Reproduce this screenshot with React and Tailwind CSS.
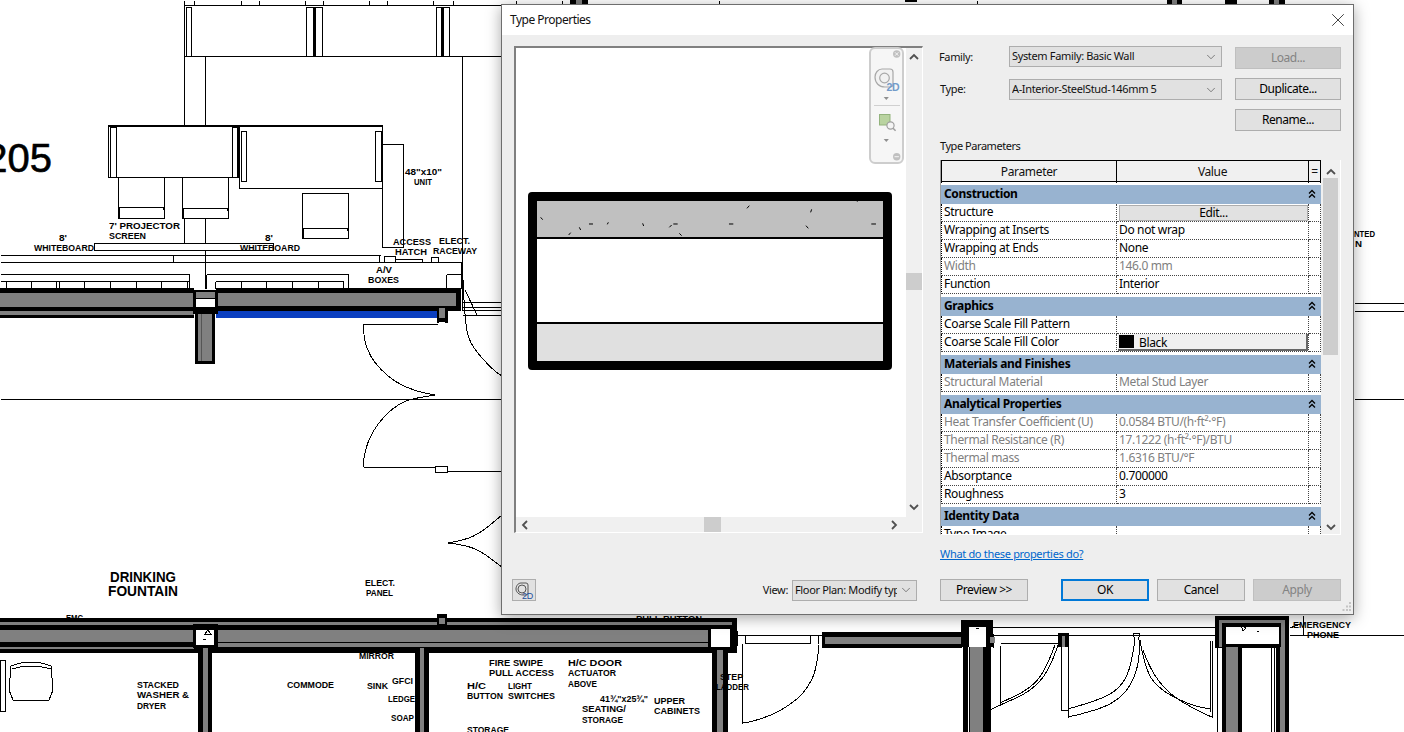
import { ChevronDown, X } from "lucide-react";

const BLACK = "#000";
const GRAY = "#808080";

// floor plan behind the dialog, all in screen pixels
const planRects = [
  // upper wall, left of column
  [0, 288, 194, 30, BLACK], [0, 293, 194, 14, GRAY], [0, 311, 194, 4, GRAY],
  // upper wall, right of column
  [216, 288, 245, 23, BLACK], [216, 293, 240, 13, GRAY], [216, 311, 222, 7, "#0b3fc0"],
  // column at the upper wall
  [193, 290, 25, 24, BLACK], [196, 292, 19, 6, GRAY], [196, 299, 19, 8, "#fff"],
  [195, 314, 20, 50, BLACK], [198, 314, 14, 47, GRAY], [201, 314, 1, 47, "#555"],
  // door stop on the upper wall
  [437, 307, 11, 16, BLACK], [439, 308, 6, 10, GRAY], [439, 322, 6, 3, "#fff"],
  // window mullions at the top
  [313, 7, 3, 49, BLACK], [441, 7, 3, 49, BLACK],
  [570, 0, 18, 4, BLACK], [576, 0, 6, 4, GRAY], [905, 0, 12, 2, BLACK],
  [1167, 0, 15, 4, BLACK], [1172, 0, 5, 4, GRAY], [1225, 0, 12, 4, BLACK], [1269, 0, 16, 4, BLACK], [1274, 0, 5, 4, GRAY],
  // lower wall
  [0, 618, 737, 35, BLACK], [0, 622, 732, 3, GRAY], [0, 630, 732, 12, GRAY], [0, 647, 194, 2, GRAY],
  [216, 643, 492, 4, GRAY],
  [193, 624, 25, 24, BLACK], [196, 630, 18, 15, "#fff"],
  [198, 648, 14, 84, BLACK], [203, 648, 5, 84, GRAY],
  [415, 648, 14, 84, BLACK], [420, 648, 4, 84, GRAY],
  [437, 614, 10, 16, BLACK], [439, 618, 6, 6, GRAY],
  [708, 625, 25, 25, BLACK], [711, 629, 19, 18, "#fff"],
  [712, 650, 16, 82, BLACK], [717, 650, 6, 82, GRAY],
  // wall between the two doors at the bottom
  [822, 632, 140, 16, BLACK], [825, 637, 137, 7, GRAY],
  [961, 620, 32, 27, BLACK], [969, 627, 17, 20, "#fff"],
  [963, 647, 28, 85, BLACK], [970, 647, 13, 85, GRAY], [968, 647, 1, 85, "#fff"],
  [990, 637, 5, 6, GRAY],
  [1058, 633, 11, 14, BLACK], [1062, 636, 3, 11, GRAY],
  // column at the right
  [1215, 616, 74, 32, BLACK], [1219, 620, 66, 27, GRAY], [1222, 623, 59, 24, BLACK], [1226, 627, 53, 17, "#fff"],
  [1222, 647, 20, 85, BLACK], [1226, 647, 12, 85, GRAY],
  [1276, 647, 13, 85, BLACK], [1280, 647, 5, 85, GRAY],
];

const planLines = [
  [184, 0, 184, 125], [184, 218, 184, 243], [205, 56, 205, 125], [205, 218, 205, 288],
  [462, 56, 462, 310], [184, 5, 500, 5], [184, 56, 500, 56],
  [194, 0, 194, 5], [241, 0, 241, 5], [259, 0, 259, 5], [305, 0, 305, 5], [323, 0, 323, 5], [369, 0, 369, 5], [387, 0, 387, 5], [433, 0, 433, 5], [453, 0, 453, 5],
  [516, 0, 516, 4], [562, 0, 562, 4], [719, 0, 719, 4], [977, 0, 977, 4],
  [0, 255, 380, 255], [0, 262, 461, 262], [173, 255, 173, 262], [379, 255, 379, 262], [461, 262, 461, 288],
  [0, 274, 189, 274], [189, 274, 189, 288], [206, 274, 348, 274], [206, 274, 206, 288], [348, 274, 348, 288],
  [446, 274, 461, 274], [446, 274, 446, 288],
  [0, 281, 188, 281], [215, 281, 343, 281],
  [6, 281, 6, 288], [31, 281, 31, 288], [56, 281, 56, 288], [59, 281, 59, 288], [84, 281, 84, 288], [110, 281, 110, 288], [136, 281, 136, 288], [161, 281, 161, 288], [187, 281, 187, 288],
  [215, 281, 215, 288], [241, 281, 241, 288], [266, 281, 266, 288], [292, 281, 292, 288], [318, 281, 318, 288], [343, 281, 343, 288],
  [462, 302, 502, 302], [462, 307, 502, 307], [462, 310, 502, 310], [462, 315, 502, 315], [1354, 303, 1404, 303], [1354, 311, 1404, 311],
  [0, 399, 502, 399], [1354, 399, 1404, 399],
  [363, 324, 437, 324], [363, 467, 436, 467], [447, 471, 502, 471],
  [737, 635, 822, 635], [745, 643, 810, 643], [745, 635, 745, 643], [810, 635, 810, 643], [818, 635, 818, 643], [737, 630, 737, 645], [742, 643, 742, 723],
  [990, 627, 1215, 627], [993, 635, 1215, 635], [1289, 635, 1404, 635], [1303, 615, 1303, 635],
  [1000, 643, 1060, 643], [1000, 645, 1000, 705], [993, 633, 993, 647], [1061, 645, 1061, 710], [1068, 645, 1068, 717], [1061, 710, 1068, 710],
  [1133, 633, 1139, 633], [1133, 633, 1134, 640], [1139, 633, 1138, 640],
  [1210, 640, 1210, 711], [1212, 640, 1212, 717], [1217, 645, 1217, 732], [1271, 647, 1271, 732], [1274, 647, 1274, 732],
];

// outlined boxes: x, y, w, h
const planBoxes = [
  [186, 7, 5, 49], [306, 7, 16, 49], [436, 7, 13, 49],
  [108, 125, 130, 52], [110, 127, 6, 50], [232, 127, 5, 50],
  [239, 125, 143, 63], [241, 131, 5, 50], [375, 131, 6, 50],
  [118, 177, 46, 41], [182, 177, 46, 41], [302, 193, 46, 45],
  [382, 144, 21, 103], [94, 243, 179, 7],
  [384, 256, 11, 6], [395, 259, 27, 3], [431, 257, 7, 5],
  [435, 466, 12, 6], [0, 660, 5, 51],
];

const planCurves = [
  [[363, 324], [364, 340], [370, 356], [380, 369], [395, 382], [415, 391], [435, 395]],
  [[435, 395], [415, 398], [400, 403], [385, 415], [372, 432], [365, 450], [363, 467]],
  [[463, 280], [465, 327], [472, 347], [493, 370], [502, 376]],
  [[465, 290], [477, 315]],
  [[448, 543], [465, 540], [480, 533], [490, 525], [502, 515]],
  [[448, 543], [465, 545], [480, 551], [490, 558], [502, 567]],
  [[819, 645], [817, 670], [805, 692], [790, 705], [770, 716], [750, 722], [742, 723]],
  [[1058, 645], [1050, 670], [1030, 692], [1000, 705], [990, 710]],
  [[1055, 645], [1045, 672], [1028, 690], [1000, 703]],
  [[1068, 709], [1100, 700], [1120, 688], [1130, 670], [1135, 640]],
  [[1068, 717], [1100, 710], [1125, 695], [1138, 670], [1140, 640]],
  [[1140, 640], [1145, 670], [1160, 690], [1190, 705], [1210, 709]],
  [[1143, 650], [1150, 670], [1170, 695], [1200, 712], [1212, 717]],
  [[1290, 628], [1300, 624]],
];

// pill backs of the chairs and the armchair at the bottom left
const planShapes = [
  "M119 210q0-3 3-3h39q3 0 3 3v8h-45z",
  "M183 211q0-3 3-3h39q3 0 3 3v7h-45z",
  "M303 231q0-3 3-3h39q3 0 3 3v7h-45z",
  "M11 666q20-8 40 0l2 24-4 10H13l-4-10z",
  "M12 669q19-6 39 0",
  "M205 634l3-4 3 4zM203 639h3",
  "M1241 625l5 3-3 3zM1254 619h2M1257 631h2",
  "M979 628l-3 1",
];

// label, x, baseline, width
const planTexts = [
  ['48"x10"', 405, 175, 37], ["UNIT", 414, 185, 18],
  ["7' PROJECTOR", 109, 229, 71], ["SCREEN", 109, 239, 37],
  ["8'", 59, 241, 8], ["WHITEBOARD", 34, 251, 60], ["8'", 265, 241, 8], ["WHITEBOARD", 240, 251, 60],
  ["ACCESS", 393, 245, 38], ["HATCH", 395, 255, 32], ["ELECT.", 439, 244, 31], ["RACEWAY", 433, 254, 44],
  ["A/V", 376, 273, 16], ["BOXES", 368, 283, 31],
  ["ELECT.", 365, 586, 30], ["PANEL", 366, 596, 27],
  ["EMC", 66, 621, 17], ["MIRROR", 359, 659, 35],
  ["STACKED", 137, 688, 42], ["WASHER &", 137, 698, 52], ["DRYER", 137, 709, 29],
  ["COMMODE", 287, 688, 47], ["SINK", 367, 689, 21], ["GFCI", 392, 684, 21], ["LEDGE", 388, 702, 27], ["SOAP", 391, 721, 23],
  ["FIRE  SWIPE", 489, 666, 54], ["PULL ACCESS", 489, 676, 65],
  ["H/C", 467, 689, 19], ["BUTTON", 467, 699, 36], ["LIGHT", 508, 689, 24], ["SWITCHES", 508, 699, 47],
  ["H/C  DOOR", 568, 666, 54], ["ACTUATOR", 568, 676, 48], ["ABOVE", 568, 687, 29],
  ['41¾"x25¾"', 600, 702, 48], ["SEATING/", 582, 712, 44], ["STORAGE", 582, 723, 41],
  ["UPPER", 654, 704, 31], ["CABINETS", 654, 714, 46], ["STORAGE", 467, 733, 42],
  ["STEP", 720, 680, 23], ["LADDER", 716, 690, 33], ["PULL BUTTON", 636, 622, 66],
  ["EMERGENCY", 1293, 628, 58], ["PHONE", 1307, 638, 32], ["NTED", 1354, 237, 21], ["N", 1355, 247, 7],
];

// rounds a list of points into one smooth open path
function smoothPath(points) {
  let d = `M${points[0][0]} ${points[0][1]}`;
  for (let i = 1; i < points.length - 1; i++) {
    const [x, y] = points[i];
    const [nx, ny] = points[i + 1];
    d += `Q${x} ${y} ${(x + nx) / 2} ${(y + ny) / 2}`;
  }
  const last = points[points.length - 1];
  return `${d}L${last[0]} ${last[1]}`;
}

function FloorPlan() {
  return (
    <svg className="absolute inset-0 font-['Liberation_Sans',sans-serif]" width="1404" height="732" viewBox="0 0 1404 732">
      <g shapeRendering="crispEdges">
        {planLines.map(([x1, y1, x2, y2], i) => (
          <line key={i} x1={x1 + 0.5} y1={y1 + 0.5} x2={x2 + 0.5} y2={y2 + 0.5} stroke="#000" />
        ))}
        {planBoxes.map(([x, y, w, h], i) => (
          <rect key={i} x={x + 0.5} y={y + 0.5} width={w} height={h} fill="#fff" stroke="#000" />
        ))}
        {planRects.map(([x, y, w, h, fill], i) => (
          <rect key={i} x={x} y={y} width={w} height={h} fill={fill} />
        ))}
        <rect x="108" y="125" width="130" height="2" fill="#000" />
        <rect x="239" y="125" width="143" height="2" fill="#000" />
        {planCurves.map((points, i) => (
          <path key={i} d={smoothPath(points)} fill="none" stroke="#000" />
        ))}
        {planShapes.map((d) => (
          <path key={d} d={d} fill="none" stroke="#000" />
        ))}
      </g>
      {planTexts.map(([label, x, y, w]) => (
        <text key={label + x} x={x} y={y} textLength={w} lengthAdjust="spacingAndGlyphs" fontSize="9.5" fontWeight="700">
          {label}
        </text>
      ))}
      <text x="110" y="582" textLength="66" lengthAdjust="spacingAndGlyphs" fontSize="14.5" fontWeight="700">DRINKING</text>
      <text x="108" y="596" textLength="70" lengthAdjust="spacingAndGlyphs" fontSize="14.5" fontWeight="700">FOUNTAIN</text>
      <text x="52" y="172" textAnchor="end" fontSize="40" stroke="#000" strokeWidth="0.6">205</text>
    </svg>
  );
}

function ArrowGlyph({ direction, className = "" }) {
  const paths = {
    up: "M1 6 L5 2 L9 6",
    down: "M1 2 L5 6 L9 2",
    left: "M6 1 L2 5 L6 9",
    right: "M2 1 L6 5 L2 9",
  };
  const horizontal = direction === "left" || direction === "right";
  return (
    <svg className={className} width={horizontal ? 8 : 10} height={horizontal ? 10 : 8} viewBox={horizontal ? "0 0 8 10" : "0 0 10 8"}>
      <path d={paths[direction]} fill="none" stroke="#505050" strokeWidth="1.8" />
    </svg>
  );
}

function ViewCubeBar() {
  return (
    <div className="absolute left-[353px] top-[-1px] h-[117px] w-[35px] rounded-[6px] border-2 border-[#cdcdcd] bg-[#f6f6f6]">
      <svg className="-m-[2px] block font-['Liberation_Sans',sans-serif]" width="35" height="117" viewBox="0 0 35 117">
        <circle cx="27.7" cy="7" r="3.7" fill="#c0c0c0" />
        <path d="M26 5.3l3.4 3.4M29.4 5.3L26 8.7" stroke="#f6f6f6" />
        <path d="M13 22h8a3 3 0 0 1 3 3v12a3 3 0 0 1-3 3h-5c-6 0-10-4-10-10 0-4 3-8 7-8z" fill="#f2f2f2" stroke="#a8a8a8" strokeWidth="1.2" />
        <circle cx="15.5" cy="31" r="4.8" fill="none" stroke="#a8a8a8" strokeWidth="1.2" />
        <text x="17.5" y="44" fontSize="10.5" fontWeight="700" fill="#739bc9">2D</text>
        <path d="M14.7 50h5.2l-2.6 3z" fill="#8f8f8f" />
        <rect x="5" y="58" width="26" height="1" fill="#d0d0d0" />
        <rect x="10.5" y="67.5" width="10.5" height="10.5" fill="#b9d3a0" stroke="#93b37d" />
        <circle cx="21.5" cy="78.5" r="3.6" fill="#f4f4f4" stroke="#a0a0a0" strokeWidth="1.2" />
        <path d="M24 81.2l2.6 2.6" stroke="#a0a0a0" strokeWidth="1.6" />
        <path d="M14.7 92h5.2l-2.6 3z" fill="#8f8f8f" />
        <circle cx="27.7" cy="109.7" r="3.7" fill="#c0c0c0" />
        <path d="M25.5 109.7h4.4" stroke="#f6f6f6" />
      </svg>
    </div>
  );
}

function WallSection() {
  const flecks = [
    "M62 97l6 7", "M146 150l6-7", "M178 127l4 8", "M207 117h12", "M262 118l3-6", "M368 115l3 8", "M448 127l7-7", "M460 117h13",
    "M478 145l7 7", "M627 117h13", "M681 70l7-8", "M872 82l3-9", "M858 122l7 8", "M1054 117h14", "M1012 47v3",
  ];
  return (
    <svg width="364" height="178" viewBox="0 0 364 178" className="block">
      <rect width="364" height="178" rx="4" fill="#000" />
      <rect x="9" y="9" width="346" height="36" fill="#c0c0c0" />
      <rect x="9" y="47" width="346" height="83" fill="#fff" />
      <rect x="9" y="132" width="346" height="37" fill="#e0e0e0" />
      <g transform="translate(-8 -7) scale(0.3333)" stroke="#000" strokeWidth="3" fill="none">
        {flecks.map((d) => (
          <path key={d} d={d} />
        ))}
      </g>
    </svg>
  );
}

function Preview() {
  return (
    <div className="flex h-[487px] w-[409px] flex-col border-t-2 border-l-2 border-r border-b border-t-[#808080] border-l-[#808080] border-r-white border-b-white">
      <div className="flex flex-1">
        <div className="relative flex-1 bg-white pl-[12px] pt-[144px]">
          <ViewCubeBar />
          <WallSection />
        </div>
        <div className="flex w-[16px] flex-col items-center bg-[#f0f0f0]">
          <ArrowGlyph direction="up" className="mt-[5px]" />
          <div className="mt-[212px] h-[17px] w-full bg-[#cdcdcd]" />
          <ArrowGlyph direction="down" className="mt-[213px]" />
        </div>
      </div>
      <div className="flex h-[15px] items-center bg-[#f0f0f0] pl-[5px] pr-[24px]">
        <ArrowGlyph direction="left" />
        <div className="ml-[175px] h-[15px] w-[17px] bg-[#cdcdcd]" />
        <ArrowGlyph direction="right" className="ml-auto" />
      </div>
    </div>
  );
}

function Select({ value, className = "" }) {
  return (
    <div className={`flex h-[21px] items-center border border-[#adadad] bg-[#e1e1e1] pl-[2px] pr-[3px] text-[11px] text-[#111] ${className}`}>
      <span className="flex-1 overflow-hidden whitespace-nowrap">{value}</span>
      <ChevronDown size={14} strokeWidth={1} className="ml-[2px] shrink-0 text-[#333]" />
    </div>
  );
}

function Button({ children, disabled, primary, className = "" }) {
  const look = disabled
    ? "border-[#bfbfbf] bg-[#cccccc] text-[#838383]"
    : primary
      ? "border-2 border-[#0078d7] bg-[#e1e1e1] text-black"
      : "border-[#adadad] bg-[#e1e1e1] text-black";
  return <div className={`flex h-[22px] items-center justify-center border tracking-[-0.45px] ${look} ${className}`}>{children}</div>;
}

const sections = [
  {
    title: "Construction",
    rows: [
      { label: "Structure", kind: "edit" },
      { label: "Wrapping at Inserts", value: "Do not wrap" },
      { label: "Wrapping at Ends", value: "None" },
      { label: "Width", value: "146.0 mm", muted: true },
      { label: "Function", value: "Interior" },
    ],
  },
  {
    title: "Graphics",
    rows: [
      { label: "Coarse Scale Fill Pattern", value: "" },
      { label: "Coarse Scale Fill Color", kind: "color" },
    ],
  },
  {
    title: "Materials and Finishes",
    rows: [{ label: "Structural Material", value: "Metal Stud Layer", muted: true }],
  },
  {
    title: "Analytical Properties",
    rows: [
      { label: "Heat Transfer Coefficient (U)", value: "0.0584 BTU/(h·ft²·°F)", muted: true },
      { label: "Thermal Resistance (R)", value: "17.1222 (h·ft²·°F)/BTU", muted: true },
      { label: "Thermal mass", value: "1.6316 BTU/°F", muted: true },
      { label: "Absorptance", value: "0.700000" },
      { label: "Roughness", value: "3" },
    ],
  },
  {
    title: "Identity Data",
    rows: [{ label: "Type Image", value: "" }],
  },
];

function ParamRow({ row }) {
  const tone = row.muted ? "text-[#7f7f7f]" : "text-black";
  return (
    <div className={`grid h-[18px] grid-cols-[176px_192px_12px] leading-[15px] ${tone}`}>
      <div className="border-r border-b border-l border-dotted border-r-[#444] border-b-[#444] border-l-black border-l-solid pl-[2px] whitespace-nowrap">
        {row.label}
      </div>
      <div className="border-r border-b border-dotted border-[#444] pl-[2px] whitespace-nowrap">
        {row.kind === "edit" && (
          <div className="mt-[1px] flex h-[16px] items-center justify-center border border-[#adadad] bg-[#e1e1e1] pb-[2px] text-black">Edit...</div>
        )}
        {row.kind === "color" && (
          <div className="-ml-[1px] flex h-[17px] items-start gap-[5px] border-r-2 border-b-2 border-[#666] bg-[#f0f0f0] pl-[1px] pt-[1px]">
            <span className="h-[13px] w-[15px] bg-black" />
            <span className="leading-[16px]">Black</span>
          </div>
        )}
        {row.value}
      </div>
      <div className="border-r border-b border-dotted border-[#444]" />
    </div>
  );
}

function ParamTable() {
  return (
    <div className="flex h-[375px] w-[401px] overflow-hidden border-r border-b border-l border-r-white border-b-white border-l-[#a0a0a0] bg-[#f0f0f0]">
      <div className="w-[380px] shrink-0 bg-white">
        <div className="grid h-[22px] grid-cols-[176px_192px_12px] border-t border-b border-black bg-[#f0f0f0] text-center leading-[22px]">
          <div className="border-l border-r border-black">Parameter</div>
          <div className="border-r border-black">Value</div>
          <div className="border-r border-black">=</div>
        </div>
        <div className="h-[3px]" />
        {sections.map((section) => (
          <div key={section.title} className="pb-[3px]">
            <div className="flex h-[19px] items-center justify-between bg-[#98b3d0] pb-[2px] pl-[3px] pr-[5px] font-bold text-black">
              {section.title}
              <svg width="8" height="10" viewBox="0 0 8 10">
                <path d="M1 4.5L4 1.5L7 4.5M1 8.5L4 5.5L7 8.5" fill="none" stroke="#000" strokeWidth="1.3" />
              </svg>
            </div>
            {section.rows.map((row) => (
              <ParamRow key={row.label} row={row} />
            ))}
          </div>
        ))}
      </div>
      <div className="flex flex-1 flex-col items-center">
        <ArrowGlyph direction="up" className="mt-[8px]" />
        <div className="mt-[2px] h-[177px] w-[15px] bg-[#cdcdcd]" />
        <ArrowGlyph direction="down" className="mt-[168px]" />
      </div>
    </div>
  );
}

function SizeGrip() {
  return (
    <svg className="absolute bottom-[2px] right-[1px]" width="10" height="10" viewBox="0 0 10 10">
      <path d="M7 0h2v2H7zM4 3.5h2v2H4zM7 3.5h2v2H7zM0.5 7h2v2h-2zM4 7h2v2H4zM7 7h2v2H7z" fill="#c4c4c4" />
    </svg>
  );
}

function TypeProperties() {
  return (
    <div className="absolute left-[501px] top-[4px] h-[611px] w-[853px] border border-[#6e6e6e] bg-[#eeeeee] text-[12px] shadow-[0_3px_14px_rgba(0,0,0,0.35)] font-['Noto_Sans',sans-serif] tracking-[-0.35px]">
      <div className="flex h-[30px] items-center justify-between bg-white pl-[8px] pr-[4px] text-[#111]">
        <span className="tracking-[-0.5px]">Type Properties</span>
        <X size={22} strokeWidth={0.8} className="text-black" />
      </div>
      <div className="flex gap-[17px] pl-[12px] pt-[11px]">
        <div className="w-[409px]">
          <Preview />
          <div className="mt-[46px] flex items-center justify-between">
            <div className="-ml-[2px] flex h-[22px] w-[24px] items-center justify-center border border-[#adadad] bg-[#e1e1e1]">
              <svg className="font-['Liberation_Sans',sans-serif]" width="20" height="18" viewBox="0 0 20 18">
                <path d="M7 2h5a2 2 0 0 1 2 2v8a2 2 0 0 1-2 2H9c-4 0-7-3-7-6 0-3 2-6 5-6z" fill="none" stroke="#555" />
                <circle cx="8" cy="8" r="4" fill="none" stroke="#555" />
                <text x="8" y="17.5" fontSize="9" fill="#1c4f9c">2D</text>
              </svg>
            </div>
            <div className="mr-[6px] flex items-center gap-[4px] text-[11px] text-[#111]">
              <span>View:</span>
              <Select value="Floor Plan: Modify typ" className="w-[125px]" />
            </div>
          </div>
        </div>
        <div className="w-[401px] text-[#111]">
          <div className="flex items-start">
            <span className="-ml-[1px] w-[70px] text-[11px] leading-[22px]">Family:</span>
            <Select value="System Family: Basic Wall" className="w-[213px]" />
            <Button disabled className="ml-[13px] mt-[1px] w-[106px]">Load...</Button>
          </div>
          <div className="mt-[9px] flex items-start">
            <span className="w-[69px] text-[11px] leading-[21px]">Type:</span>
            <Select value="A-Interior-SteelStud-146mm 5" className="mt-[1px] w-[213px]" />
            <Button className="ml-[13px] w-[106px]">Duplicate...</Button>
          </div>
          <div className="mt-[9px] flex justify-end">
            <Button className="w-[106px]">Rename...</Button>
          </div>
          <div className="mt-[7px] h-[16px] text-[11px] leading-[16px] tracking-[-0.45px]">Type Parameters</div>
          <div className="mt-[6px]">
            <ParamTable />
          </div>
          <div className="mt-[11px] h-[16px] text-[11px] leading-[16px] tracking-[-0.32px]">
            <span className="text-[#0066cc] underline">What do these properties do?</span>
          </div>
          <div className="mt-[17px] flex">
            <Button className="w-[88px]">{"Preview >>"}</Button>
            <Button primary className="ml-[33px] w-[88px]">OK</Button>
            <Button className="ml-[8px] w-[88px]">Cancel</Button>
            <Button disabled className="ml-[8px] w-[88px]">Apply</Button>
          </div>
        </div>
      </div>
      <SizeGrip />
    </div>
  );
}

export default function App() {
  return (
    <div className="relative h-[732px] w-[1404px] overflow-hidden bg-white">
      <FloorPlan />
      <TypeProperties />
    </div>
  );
}
